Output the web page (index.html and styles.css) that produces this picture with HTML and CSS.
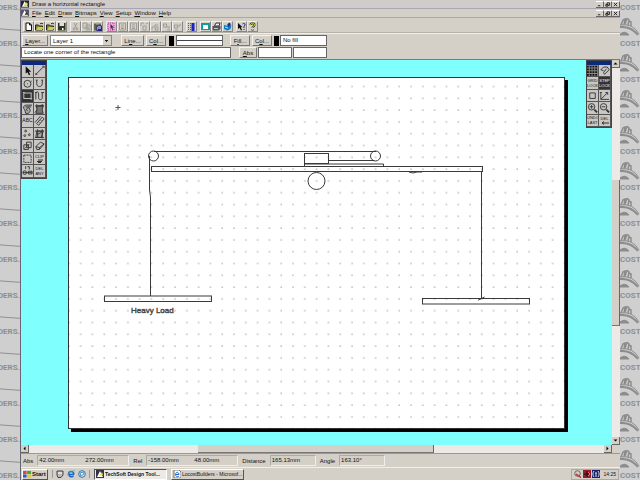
FILE: index.html
```html
<!DOCTYPE html>
<html lang="en">

<head>
    <meta charset="UTF-8">
    <meta name="viewport" content="width=device-width, initial-scale=1.0">
    <title>TechSoft Design Tools</title>
    <link rel="stylesheet" href="styles.css">
</head>

<body>
    <!-- Wallpaper left -->
    <aside class="wallpaper wallpaper-left" id="wall-left"></aside>

    <main class="app">
        <!-- Title bar -->
        <header class="title-bar">
            <svg class="app-icon" viewBox="0 0 9 8"><rect width="9" height="8" fill="#223"/><path d="M1 7L4 1l4 6z" fill="#fff"/><path d="M3 6l3-4 2 2-3 3z" fill="#dd4"/></svg>
            <h1>Draw a horizontal rectangle</h1>
            <div class="window-buttons">
                <button aria-label="Minimize"><svg viewBox="0 0 7 6"><path d="M1.500 4.500h3"/></svg></button>
                <button aria-label="Restore"><svg viewBox="0 0 7 6"><path d="M3 3V1h3v3H4M1.500 3h2.500v2H1.500z"/></svg></button>
                <button aria-label="Close"><svg viewBox="0 0 7 6"><path d="M1.500 1l4 4M5.500 1l-4 4"/></svg></button>
            </div>
        </header>

        <!-- Menu -->
        <nav class="menu-bar">
            <svg class="app-icon" viewBox="0 0 9 8"><rect width="9" height="8" fill="#556"/><path d="M1 7L4 1l4 6z" fill="#fff"/><path d="M4 6l2-3 2 3z" fill="#333"/></svg>
            <a href="#"><u>F</u>ile</a>
            <a href="#"><u>E</u>dit</a>
            <a href="#"><u>D</u>raw</a>
            <a href="#"><u>B</u>itmaps</a>
            <a href="#"><u>V</u>iew</a>
            <a href="#"><u>S</u>etup</a>
            <a href="#"><u>W</u>indow</a>
            <a href="#"><u>H</u>elp</a>
            <div class="window-buttons">
                <button aria-label="Minimize document"><svg viewBox="0 0 7 6"><path d="M1.500 4.500h3"/></svg></button>
                <button aria-label="Restore document"><svg viewBox="0 0 7 6"><path d="M3 3V1h3v3H4M1.500 3h2.500v2H1.500z"/></svg></button>
                <button aria-label="Close document"><svg viewBox="0 0 7 6"><path d="M1.500 1l4 4M5.500 1l-4 4"/></svg></button>
            </div>
        </nav>

        <!-- Toolbar -->
        <div class="toolbar">
            <div class="tool-group">
                <button aria-label="New"><svg viewBox="0 0 9 9"><path d="M2 1h3.500L7.500 3v5.500H2z" fill="#fff" stroke="#111"/><path d="M5.500 1v2h2" stroke="#111" fill="none"/></svg></button>
                <button aria-label="Open"><svg viewBox="0 0 9 9"><path d="M.5 8V3h3l1 1h3v4z" fill="#883" stroke="#221"/><path d="M1 8l2-3h6L7 8z" fill="#cc5"/><path d="M5 2c1-1 2-1 3 0" stroke="#111" fill="none"/></svg></button>
                <button aria-label="Open clip"><svg viewBox="0 0 9 9"><path d="M.5 8V3h3l1 1h3v4z" fill="#883" stroke="#221"/><path d="M1 8l2-3h6L7 8z" fill="#cc5"/><path d="M5 2c1-1 2-1 3 0" stroke="#111" fill="none"/></svg></button>
                <button aria-label="Save"><svg viewBox="0 0 9 9"><rect x="1" y="1" width="7.500" height="7.500" fill="#33381c"/><rect x="2.500" y="1" width="4.500" height="3" fill="#dde"/><rect x="5" y="6" width="1.500" height="2" fill="#fff"/></svg></button>
            </div>
            <div class="tool-group">
                <button aria-label="Cut"><svg class="dim" viewBox="0 0 9 9"><path d="M3 1l2.500 5M6 1L3.500 6"/><circle cx="3" cy="7" r="1"/><circle cx="6" cy="7" r="1"/></svg></button>
                <button aria-label="Copy"><svg class="dim" viewBox="0 0 9 9"><path d="M1 1h4v5H1zM4 3h4v5H4zM5 5h2M5 6.500h2"/></svg></button>
                <button aria-label="Paste"><svg viewBox="0 0 9 9"><rect x="1" y="1.500" width="7" height="7" fill="#666347"/><rect x="3" y="0.500" width="3" height="2" fill="#aa9"/><rect x="4" y="4" width="4.500" height="4.500" fill="#fff" stroke="#228"/><path d="M5 6h3M5 7.500h3" stroke="#228"/></svg></button>
            </div>
            <div class="tool-group">
                <button aria-label="Select all"><svg viewBox="0 0 9 9"><rect width="9" height="9" fill="#f2a8dc"/><path d="M1 1h6v7H1z" fill="none" stroke="#b339a0" stroke-dasharray="1 1"/><path d="M3.500 2v5l1-1 1 2 .7-.4-1-2H7z" fill="#334"/></svg></button>
                <button aria-label="Group"><svg class="dim" viewBox="0 0 9 9"><path d="M1.500 1h6v7h-6zM3 3h3M3 5h3M3 6.500h3"/></svg></button>
                <button aria-label="Ungroup"><svg class="dim" viewBox="0 0 9 9"><path d="M1.500 1h6v7h-6zM3 3h3M3 5h3M3 6.500h3"/></svg></button>
                <button aria-label="Bring to front"><svg class="dim" viewBox="0 0 9 9"><path d="M1 4V1h3M3 8V4h3v4zM6 2l2-1"/></svg></button>
                <button aria-label="Send to back"><svg class="dim" viewBox="0 0 9 9"><path d="M1 8V5h3V3h3M5 5h2v3H4z"/></svg></button>
                <button aria-label="Forward"><svg class="dim" viewBox="0 0 9 9"><path d="M1.500 2h3v3h-3zM4 5h2M5 8h3M7 4v3"/></svg></button>
                <button aria-label="Backward"><svg class="dim" viewBox="0 0 9 9"><path d="M1.500 3h3v3h-3zM4 4h3V2M2 8h3"/></svg></button>
            </div>
            <div class="tool-group">
                <button aria-label="Grid"><svg viewBox="0 0 9 9"><path d="M1.500 1v8M3.500 1v8" stroke="#4450ee" stroke-dasharray="1 1"/><path d="M6 1v8" stroke="#1a22c0" stroke-width="3"/></svg></button>
            </div>
            <div class="tool-group">
                <button aria-label="View page"><svg viewBox="0 0 9 9"><rect x="0" y="1" width="9" height="7" fill="#149c9c"/><rect x="2" y="3" width="5" height="4" fill="#fff"/></svg></button>
                <button aria-label="Print"><svg viewBox="0 0 9 9"><path d="M2.500 4L4 1h4L7 4z" fill="#eee" stroke="#333"/><path d="M.5 4h8v3l-2 1.500H.5z" fill="#555"/><path d="M2 6.500h4" stroke="#ccc"/></svg></button>
                <button aria-label="Paint"><svg viewBox="0 0 9 9"><path d="M1 3l4 1 3.500-1-1 4-3 1.500L1 7z" fill="#137cc4"/><path d="M4 3l2-2.500L8 2 6 5z" fill="#123a80"/><path d="M2 5l3 1" stroke="#8ef"/></svg></button>
            </div>
            <div class="tool-group">
                <button aria-label="Context help"><svg viewBox="0 0 9 9"><path d="M1 1v6l1.500-1.200L4 8.500 5 8 3.700 5.300h1.800z" fill="#111"/><path d="M5.500 2c1-1.500 3-.5 2.500 1L7 4.500V6M7 7v1" stroke="#229" fill="none"/></svg></button>
                <button aria-label="Help"><svg viewBox="0 0 9 9"><path d="M2.500 3c0-2.500 4-2.500 4 0 0 1.500-2 1.200-2 3M4.500 7v1.500" stroke="#332" stroke-width="2" fill="none"/><path d="M2.500 3c0-2.500 4-2.500 4 0 0 1.500-2 1.200-2 3M4.500 7v1" stroke="#dd3" fill="none"/></svg></button>
            </div>
        </div>

        <!-- Line and fill options -->
        <div class="options">
            <button class="btn btn-layer"><u>L</u>ayer...</button>
            <select class="layer-select" aria-label="Layer">
                <option>Layer 1</option>
            </select>
            <button class="btn btn-line">Li<u>n</u>e...</button>
            <button class="btn">C<u>o</u>l...</button>
            <span class="swatch"></span>
            <span class="line-sample"></span>
            <button class="btn btn-fill">F<u>i</u>ll...</button>
            <button class="btn">C<u>o</u>l...</button>
            <span class="swatch swatch-fill"></span>
            <span class="fill-sample">No fill</span>
        </div>

        <div class="prompt-row">
            <p class="prompt">Locate one corner of the rectangle</p>
            <button class="btn btn-abs"><u>A</u>bs</button>
            <input class="coord" type="text" aria-label="X coordinate">
            <input class="coord" type="text" aria-label="Y coordinate">
        </div>

        <!-- Drawing area -->
        <section class="workspace">
            <div class="canvas">
                <div class="sheet">
                    <svg viewBox="0 0 495 350">
                        <defs>
                            <pattern id="dots" width="11.800" height="11.800" x="5.600" y="2.500" patternUnits="userSpaceOnUse">
                                <rect x="5.500" y="5.500" width="1" height="1" fill="#666"/>
                            </pattern>
                        </defs>
                        <rect width="495" height="350" fill="url(#dots)"/>
                        <g fill="none" stroke="#3a3a3a">
                            <circle cx="84.500" cy="78" r="5"/>
                            <circle cx="306.500" cy="78" r="5"/>
                            <path d="M85 73.500h222M259.500 82.500h46"/>
                            <rect x="235.500" y="75.500" width="24" height="10"/>
                            <path d="M235.500 86v2.500h79V86z"/>
                            <rect x="82.500" y="88.500" width="331" height="5"/>
                            <circle cx="247.500" cy="103" r="8.500"/>
                            <path d="M80.500 78v34l1 7v99M412.500 94v126l-3 2 6-3"/>
                            <rect x="35.500" y="218" width="107" height="5.500"/>
                            <rect x="353.500" y="220.500" width="107" height="5.500"/>
                            <path d="M340 94l4 1 4-1h5"/>
                            <path d="M46.500 29.500h5M49 27v5" stroke="#555"/>
                        </g>
                        <text class="load-label" x="62" y="235">Heavy Load</text>
                    </svg>
                </div>

                <!-- Left tool palette -->
                <div class="palette palette-left">
                    <div class="palette-title"></div>
                    <button aria-label="Pointer"><svg viewBox="0 0 12 12"><path d="M4 1v8l2-1.500L7.500 11 9 10 7.500 7H10z" fill="#111" stroke="none"/></svg></button>
                    <button aria-label="Line"><svg viewBox="0 0 12 12"><path d="M2 10l8-8M1 9.500h2v1M9 1h2v2"/></svg></button>
                    <button aria-label="Circle"><svg viewBox="0 0 12 12"><circle cx="6" cy="6" r="3.800"/><path d="M5.500 6h1M9.500 4l1-1"/></svg></button>
                    <button aria-label="Arc"><svg viewBox="0 0 12 12"><path d="M3 2v4c0 4 6 4 6 0V2M2 2h2M8 2h2"/></svg></button>
                    <button class="active" aria-label="Rectangle"><svg viewBox="0 0 12 12"><rect x="2" y="3" width="8" height="6"/><path d="M1 2.500h2M9 9.500h2"/></svg></button>
                    <button aria-label="Curve"><svg viewBox="0 0 12 12"><path d="M2 10V4c0-3 3-3 3 0v4c0 3 4 3 4 0V2M1 2.500h2M8 2.500h3"/></svg></button>
                    <button aria-label="Fill path"><svg viewBox="0 0 12 12"><path d="M11 2H5C1 2 1 6 3 7l1 4h3c3-2 2-6 0-6-2 0-3 3-1 3M4 4h6" fill="#aaa"/></svg></button>
                    <button aria-label="Fill area"><svg viewBox="0 0 12 12"><path d="M3 3l7-1-1 5 1 4H2l1-4z" fill="#777"/><path d="M1 3h10M3 1v4M1 10l3-3M9 1v3"/></svg></button>
                    <button class="abc" aria-label="Text">ABC</button>
                    <button aria-label="Measure"><svg viewBox="0 0 12 12"><path d="M3 9l6-7 2 2-6 7zM1 8l6-7M5 7l1 1M7 5l1 1"/></svg></button>
                    <button aria-label="Points"><svg viewBox="0 0 12 12"><circle cx="4" cy="3" r="1"/><circle cx="3" cy="8" r="1"/><circle cx="8" cy="7" r="1"/></svg></button>
                    <button aria-label="Hatch"><svg viewBox="0 0 12 12"><path d="M3 3h7L8 10H2zM1 3h10M4 1v9M9 1v10M1 10h10M3 7l6-3" fill="#aaa"/></svg></button>
                    <button aria-label="Scale"><svg viewBox="0 0 12 12"><path d="M2 5h5v5H2zM5 2h5v6H5zM3 9l5-5"/></svg></button>
                    <button aria-label="Erase"><svg viewBox="0 0 12 12"><path d="M2 7l5-5 4 2-5 6H3zM2 7l4 1 5-4M6 8v2"/></svg></button>
                    <button aria-label="Select area"><svg viewBox="0 0 12 12"><path d="M2 2h8v8H2z" stroke-dasharray="2 1"/></svg></button>
                    <button aria-label="Clip">CLIP<svg class="small" viewBox="0 0 8 4"><path d="M2 1h5M1 2.500h5M2 3.500h3"/></svg></button>
                    <button aria-label="Cut and join"><svg viewBox="0 0 12 12"><path d="M4 1v3M6 1.500h2v3"/><circle cx="3" cy="8" r="2"/><path d="M1 8h10M7 6.500h4v3H7z"/></svg></button>
                    <button aria-label="Delete any">DEL<br>ANY</button>
                </div>

                <!-- Right tool palette -->
                <div class="palette palette-right">
                    <div class="palette-title"></div>
                    <button class="pressed" aria-label="Grid dots"><svg viewBox="0 0 12 12"><path d="M0 1.500h12M0 4.500h12M0 7.500h12M0 10.500h12" stroke="#111" stroke-width="2" stroke-dasharray="2 1"/></svg></button>
                    <button aria-label="Redraw"><svg viewBox="0 0 12 12"><path d="M2 5l3-3h4l2 3-5 5-1-2 3-4M2 5l3 1"/></svg></button>
                    <button aria-label="Grid lock">GRID<br>LOCK</button>
                    <button class="active" aria-label="Step lock">STEP<br>LOCK</button>
                    <button aria-label="Zoom page"><svg viewBox="0 0 12 12"><path d="M3 3h6v6H3z"/></svg></button>
                    <button aria-label="Axes"><svg viewBox="0 0 12 12"><path d="M2 2v8h9M2 10l7-7M7 2.500h2.500V5M1 3l1-1 1 1"/></svg></button>
                    <button aria-label="Zoom in"><svg viewBox="0 0 12 12"><circle cx="5" cy="5" r="3.500"/><path d="M3 5h4M5 3v4"/><path d="M8 8l3 3" stroke-width="2"/></svg></button>
                    <button aria-label="Zoom out"><svg viewBox="0 0 12 12"><circle cx="5" cy="5" r="3.500"/><path d="M3 5h4"/><path d="M8 8l3 3" stroke-width="2"/></svg></button>
                    <button aria-label="Undo last">UNDO<br>LAST</button>
                    <button aria-label="Delete back">DEL<svg class="small" viewBox="0 0 8 4"><path d="M1 2h7M3 .5L1 2l2 1.500"/></svg></button>
                </div>
            </div>

            <div class="scroll-y">
                <button aria-label="Scroll up"><svg viewBox="0 0 7 7"><path d="M1.500 4.500h4l-2-2z"/></svg></button>
                <div class="track"><div class="thumb"></div></div>
                <button aria-label="Scroll down"><svg viewBox="0 0 7 7"><path d="M1.500 2.500h4l-2 2z"/></svg></button>
            </div>
            <div class="scroll-x">
                <button aria-label="Scroll left"><svg viewBox="0 0 7 7"><path d="M4.500 1.500v4l-2-2z"/></svg></button>
                <div class="track"><div class="thumb"></div></div>
                <button aria-label="Scroll right"><svg viewBox="0 0 7 7"><path d="M2.500 1.500v4l2-2z"/></svg></button>
            </div>
        </section>

        <!-- Status bar -->
        <div class="status-bar">
            <span>Abs</span>
            <div class="readout pair"><span>42.00mm</span><span>272.00mm</span></div>
            <span>Rel</span>
            <div class="readout pair"><span>-158.00mm</span><span>48.00mm</span></div>
            <span>Distance</span>
            <div class="readout">165.13mm</div>
            <span>Angle</span>
            <div class="readout">163.10°</div>
        </div>

        <!-- Task bar -->
        <footer class="task-bar">
            <button class="start"><svg viewBox="0 0 8 8"><rect x="0" y="1" width="3.500" height="3" fill="#d43"/><rect x="4" y="1" width="4" height="3" fill="#4a4"/><rect x="0" y="4.500" width="3.500" height="3" fill="#35c"/><rect x="4" y="4.500" width="4" height="3" fill="#dc3"/></svg>Start</button>
            <div class="quick-launch">
                <svg viewBox="0 0 8 8"><path d="M1 1h6v4L5 7.500H2L1 5z" fill="#bbb" stroke="#444"/><path d="M2 3h4" stroke="#fff"/></svg>
                <svg viewBox="0 0 8 8"><path d="M7 4.500H2C2 7 5 7.500 6.500 6M1.500 4C2 .5 7 1 6.800 4.500" fill="none" stroke="#1668c4" stroke-width="1.500"/><path d="M0 6c1-4 5-6 8-5" stroke="#5ab" fill="none" stroke-width=".7"/></svg>
                <svg viewBox="0 0 8 8"><circle cx="4" cy="4" r="3.300" fill="#e8f2fa" stroke="#2870a8"/><path d="M2 3l3-1 1 2-3 2z" fill="none" stroke="#4a8ec0"/></svg>
            </div>
            <button class="task task-active"><svg viewBox="0 0 8 8"><rect width="8" height="8" fill="#334"/><path d="M1 7l3-6 3 6z" fill="#fff"/><path d="M3 6l3-4 1 3z" fill="#dd4"/></svg>TechSoft Design Tool...</button>
            <button class="task"><svg viewBox="0 0 8 8"><path d="M1 0h5l2 2v6H1z" fill="#fff" stroke="#777"/><path d="M6 4.500H2.500C2.500 7 5 7 6 6M2.500 4C3 1.500 6 2 6 4.500" fill="none" stroke="#1668c4"/></svg>LocostBuilders - Microsof...</button>
            <div class="tray">
                <svg viewBox="0 0 8 8"><circle cx="3.500" cy="3.500" r="2.800" fill="#ccc" stroke="#665"/><path d="M2 4l5 3.500" stroke="#b33" stroke-width="1.500"/></svg>
                <svg viewBox="0 0 8 8"><rect width="8" height="8" fill="#981c2c"/><path d="M1 4h6M4 1v6" stroke="#111"/><path d="M5 2l2 2-2 2" stroke="#f66" fill="none"/></svg>
                <svg viewBox="0 0 8 8"><rect width="8" height="8" fill="#17226c"/><path d="M2 1c-1.500 2-1.500 4 0 6M6 1c1.500 2 1.500 4 0 6M4 3v4M3 3h2" stroke="#dde" fill="none"/></svg>
                <time>14:25</time>
            </div>
        </footer>
    </main>

    <!-- Wallpaper right -->
    <aside class="wallpaper wallpaper-right" id="wall-right"></aside>

    <script>
        // Tile the wallpaper down both sides of the window
        const leftTile = `<div class="tile"><span>DERS.</span>
            <svg viewBox="0 0 21 6"><path d="M0 2l21 1.500"/></svg></div>`;
        const rightTile = `<div class="tile"><span>COST</span>
            <svg viewBox="0 0 20 18">
                <path class="solid" d="M0 16q5-4 9 1H0z"/>
                <path d="M0 9q11-1 18 8" stroke-width="2"/>
                <path d="M0 7q13-2 19 9"/>
                <path d="M1 7l2-5 2-1-1 6M5 6l2-6 2 2-1 5M9 3l2 1v4" stroke-width="1.500"/>
            </svg></div>`;

        const count = Math.ceil(window.innerHeight / 36);
        document.getElementById("wall-left").innerHTML = leftTile.repeat(count);
        document.getElementById("wall-right").innerHTML = rightTile.repeat(count);
    </script>
</body>

</html>
```

FILE: styles.css
```css
/* General Styles */
* {
    margin: 0;
    padding: 0;
    box-sizing: border-box;
}

body {
    display: flex;
    height: 100vh;
    overflow: hidden;
    background: #cfcfcf;
    font-family: "Liberation Sans", Arial, sans-serif;
    font-size: 6px;
    line-height: 8px;
    color: #111;
}

button,
input,
select {
    font: inherit;
    color: inherit;
    border: none;
    border-radius: 0;
    background: #d4d0c8;
}

svg {
    display: block;
}

a {
    color: inherit;
    text-decoration: none;
}

/* Wallpaper */
.wallpaper {
    height: 100vh;
    overflow: hidden;
    color: #8e8e8e;
    font-family: Roboto, "Liberation Sans", sans-serif;
    font-size: 8px;
    font-weight: bold;
    line-height: 10px;
}

.wallpaper-left {
    flex: 0 0 21px;
    border-right: 1px solid #667;
}

.wallpaper-right {
    flex: 0 0 20px;
}

.tile {
    display: flex;
    flex-direction: column;
    height: 36px;
    padding-top: 3px;
}

.wallpaper-left .tile {
    align-items: flex-end;
    gap: 14px;
}

.wallpaper-right .tile {
    gap: 5px;
}

.tile svg {
    width: 100%;
    fill: none;
    stroke: #8c8c8c;
}

.tile .solid {
    fill: #8c8c8c;
}

/* Window */
.app {
    flex: 1;
    min-width: 0;
    display: flex;
    flex-direction: column;
    background: #d4d0c8;
}

.title-bar,
.menu-bar {
    display: flex;
    align-items: center;
    gap: 3px;
    height: 9px;
    border-bottom: 1px solid #a9a6b4;
    white-space: nowrap;
}

.title-bar {
    background: #cfccca;
}

.title-bar h1 {
    font-size: 6px;
    font-weight: normal;
}

.app-icon {
    width: 8px;
    height: 8px;
}

.window-buttons {
    display: flex;
    margin-left: auto;
}

.window-buttons button {
    width: 8px;
    height: 7px;
    border-right: 1px solid #666;
    border-bottom: 1px solid #666;
    border-top: 1px solid #fff;
}

.window-buttons svg {
    width: 7px;
    height: 5px;
    fill: none;
    stroke: #111;
}

/* Toolbar */
.toolbar {
    display: flex;
    align-items: center;
    gap: 3px;
    height: 15px;
    padding: 2px 2px 0;
    border-bottom: 1px solid #b5b1ab;
}

.tool-group {
    display: flex;
}

.tool-group button {
    width: 11px;
    height: 11px;
    border-top: 1px solid #eee;
    border-left: 1px solid #eee;
    border-right: 1px solid #888;
    border-bottom: 1px solid #888;
}

.tool-group svg {
    width: 9px;
    height: 9px;
}

.dim {
    fill: none;
    stroke: #a09d98;
}

/* Options */
.options,
.prompt-row {
    display: flex;
    align-items: center;
    height: 13px;
    padding-left: 1px;
    gap: 2px;
    white-space: nowrap;
}

.options {
    height: 14px;
    border-top: 1px solid #f0eeea;
}

.btn {
    height: 11px;
    width: 20px;
    border-top: 1px solid #f4f2ee;
    border-left: 1px solid #f4f2ee;
    border-right: 1px solid #777;
    border-bottom: 1px solid #777;
}

.btn-layer {
    width: 26px;
}

.btn-line {
    width: 23px;
    margin-left: 7px;
}

.btn-fill {
    margin-left: 5px;
}

.layer-select {
    appearance: none;
    width: 62px;
    height: 11px;
    padding-left: 2px;
    border: 1px solid #888;
    background: linear-gradient(#222, #222) 54px 4px / 3px 1px no-repeat,
        linear-gradient(#222, #222) 55px 5px / 1px 1px no-repeat,
        linear-gradient(#d4d0c8, #d4d0c8) right / 8px 9px no-repeat,
        #fff;
}

.swatch {
    width: 5px;
    height: 10px;
    margin-left: 1px;
    background: #000;
}

.swatch-fill {
    margin-left: 0;
}

.line-sample,
.fill-sample,
.coord,
.prompt {
    height: 11px;
    border: 1px solid #666;
    background: #fff;
    line-height: 9px;
}

.line-sample {
    width: 47px;
    background: linear-gradient(#444, #444) center / 100% 1px no-repeat #fff;
}

.fill-sample {
    width: 47px;
    padding-left: 2px;
    margin-left: -1px;
}

.prompt-row {
    gap: 1px;
    padding-left: 0;
    height: 13px;
    padding-bottom: 1px;
    border-bottom: 1px solid #777a80;
}

.prompt {
    width: 210px;
    padding-left: 2px;
}

.btn-abs {
    width: 18px;
    margin-left: 7px;
}

.coord {
    width: 34px;
    padding: 0 2px;
}

/* Workspace */
.workspace {
    flex: 1;
    min-height: 0;
    display: grid;
    grid-template-columns: 1fr 8px;
    grid-template-rows: 1fr 8px;
}

.canvas {
    position: relative;
    display: flex;
    min-height: 0;
    padding: 17px 47px 16px;
    background: #80ffff;
}

.sheet {
    flex: 1;
    border: 1px solid #333;
    background: #fff;
    box-shadow: 3px 3px 0 #000;
}

.sheet svg {
    width: 100%;
    height: 100%;
}

.load-label {
    font-size: 8px;
    fill: #444;
    stroke: #444;
    stroke-width: 0.4;
}

/* Floating palettes */
.palette {
    position: absolute;
    top: 0;
    display: grid;
    grid-template-columns: 1fr 1fr;
    grid-template-rows: 4px;
    grid-auto-rows: 1fr;
    width: 26px;
    border: 1px solid #444;
    background: #444;
    font-size: 4px;
    line-height: 5px;
}

.palette-left {
    left: 0;
    height: 119px;
}

.palette-right {
    right: 0;
    height: 68px;
}

.palette-title {
    grid-column: 1 / -1;
    background: #0a2a80;
}

.palette button {
    display: block;
    min-width: 0;
    min-height: 0;
    overflow: hidden;
    border-right: 1px solid #555;
    border-bottom: 1px solid #555;
    background: #c9c7c4;
    text-align: center;
}

.palette .abc {
    font-size: 5px;
}

.palette svg {
    width: 100%;
    height: 100%;
    fill: none;
    stroke: #333;
}

.palette .small {
    width: 8px;
    height: 4px;
    margin: 0 auto;
}

.palette .active {
    background: #333;
    color: #fff;
}

.palette .active svg {
    stroke: #ccc;
}

.palette .pressed {
    background: #888;
}

/* Scrollbars */
.scroll-y {
    display: flex;
    flex-direction: column;
}

.scroll-x {
    display: flex;
}

.scroll-y button,
.scroll-x button {
    width: 8px;
    height: 8px;
    border-right: 1px solid #666;
    border-bottom: 1px solid #666;
}

.track {
    display: flex;
    flex: 1;
    background: #ece9e6;
}

.thumb {
    background: #d4d0c8;
    border-right: 1px solid #666;
    border-bottom: 1px solid #777;
}

.scroll-y .track {
    flex-direction: column;
    padding-top: 112px;
}

.scroll-y .thumb {
    height: 57%;
}

.scroll-x .thumb {
    width: 41%;
    margin-left: 169px;
}

/* Status bar */
.status-bar {
    display: flex;
    align-items: center;
    gap: 4px;
    height: 14px;
    padding-left: 2px;
    border-top: 1px solid #999;
    white-space: nowrap;
}

.readout {
    width: 46px;
    height: 11px;
    padding-left: 1px;
    border: 1px solid #eee;
    border-top-color: #aaa;
    border-left-color: #aaa;
    line-height: 9px;
}

.pair {
    display: grid;
    grid-template-columns: 46px 1fr;
    width: 92px;
}

/* Task bar */
.task-bar {
    display: flex;
    align-items: center;
    gap: 4px;
    height: 13px;
    padding: 0 1px;
    border-top: 1px solid #eee;
    font-size: 5px;
}

.task-bar svg {
    flex: none;
    width: 8px;
    height: 8px;
}

.start,
.task {
    display: flex;
    align-items: center;
    gap: 1px;
    height: 11px;
    border-top: 1px solid #fff;
    border-left: 1px solid #fff;
    border-right: 1px solid #555;
    border-bottom: 1px solid #555;
    white-space: nowrap;
}

.start {
    width: 26px;
    font-size: 6px;
    font-weight: bold;
}

.quick-launch {
    display: flex;
    gap: 3px;
    padding: 0 3px;
    border-left: 1px solid #999;
    border-right: 1px solid #999;
}

.task {
    width: 73px;
    padding-left: 1px;
}

.task-active {
    border-color: #555 #fff #fff #555;
    background: #eceae6;
    font-weight: bold;
}

.tray {
    display: flex;
    align-items: center;
    gap: 1px;
    height: 11px;
    margin-left: auto;
    padding: 0 2px;
    border: 1px solid #aaa;
}

.tray time {
    padding-left: 2px;
}
```
